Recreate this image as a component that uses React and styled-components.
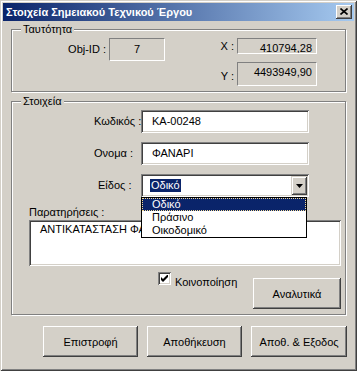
import React from 'react';
import styled, { createGlobalStyle } from 'styled-components';

const FONT = `"Liberation Sans", "DejaVu Sans", Arial, sans-serif`;

const GlobalStyle = createGlobalStyle`
  html, body { margin: 0; padding: 0; background: #D4D0C8; }
  body { font-family: ${FONT}; font-size: 11px; }
`;

const Window = styled.div`
  width: 357px;
  height: 371px;
  box-sizing: border-box;
  padding: 3px;
  background: #D4D0C8;
  box-shadow: inset 1px 1px #D4D0C8, inset -1px -1px #404040, inset 2px 2px #fff, inset -2px -2px #808080;
  display: flex;
  flex-direction: column;
  font-family: ${FONT};
  font-size: 11px;
  color: #000;
`;

const TitleBar = styled.div`
  height: 18px;
  flex: none;
  display: flex;
  align-items: center;
  justify-content: space-between;
  padding: 0 2px 0 3px;
  background: linear-gradient(to right, #0A246A, #A6CAF0);
`;

const Title = styled.span`
  color: #fff;
  font-weight: bold;
  font-size: 11px;
  line-height: 13px;
  white-space: nowrap;
`;

const CloseButton = styled.div`
  width: 16px;
  height: 14px;
  box-sizing: border-box;
  background: #D4D0C8;
  box-shadow: inset -1px -1px #404040, inset 1px 1px #fff, inset -2px -2px #808080;
  display: flex;
  align-items: center;
  justify-content: center;
  padding-bottom: 1px;
`;

const Body = styled.div`
  padding: 8px 7px 0 8px;
  display: flex;
  flex-direction: column;
`;

const GroupBox = styled.div`
  width: 335px;
  box-sizing: border-box;
  margin-top: ${p => p.$mt || 0}px;
  padding-bottom: ${p => p.$pb}px;
  border: 1px solid #808080;
  box-shadow: inset 1px 1px #fff, 1px 1px #fff;
  display: flex;
  flex-direction: column;
`;

const Caption = styled.div`
  align-self: flex-start;
  margin: -7px 0 0 9px;
  padding: 0 2px;
  height: 13px;
  line-height: 13px;
  background: #D4D0C8;
`;

const IdGrid = styled.div`
  display: grid;
  grid-template-columns: 97px 56px 72px 80px;
  grid-template-rows: 16px 24px;
  row-gap: 8px;
  margin-top: 2px;
`;

const IdLabel = styled.div`
  grid-column: ${p => p.$col};
  grid-row: ${p => p.$row};
  align-self: start;
  text-align: right;
  padding-right: 3px;
  line-height: ${p => p.$h}px;
  padding-top: ${p => p.$pt || 0}px;
  white-space: nowrap;
`;

const StaticField = styled.div`
  grid-column: ${p => p.$col};
  grid-row: ${p => p.$row};
  align-self: start;
  box-sizing: border-box;
  height: ${p => p.$h}px;
  border: 1px solid;
  border-color: #808080 #fff #fff #808080;
  padding: ${p => p.$pt}px 4px 0 4px;
  line-height: 13px;
  text-align: ${p => p.$align};
  overflow: hidden;
  white-space: nowrap;
`;

const FormGrid = styled.div`
  display: grid;
  grid-template-columns: 47px 168px;
  grid-auto-rows: 23px;
  row-gap: 9px;
  margin: 2px 0 0 82px;
`;

const FormLabel = styled.div`
  padding-left: ${p => p.$indent || 0}px;
  line-height: 23px;
  white-space: nowrap;
`;

const sunken = `
  box-shadow: inset 1px 1px #808080, inset -1px -1px #fff, inset 2px 2px #404040, inset -2px -2px #D4D0C8;
`;

const TextBox = styled.div`
  box-sizing: border-box;
  height: 23px;
  background: #fff;
  ${sunken}
  padding-left: 11px;
  line-height: 23px;
  white-space: nowrap;
`;

const Combo = styled.div`
  position: relative;
  box-sizing: border-box;
  height: 23px;
  background: #fff;
  ${sunken}
  display: flex;
  align-items: center;
  padding: 2px 2px 2px 11px;
`;

const Selected = styled.span`
  background: #0A246A;
  color: #fff;
  line-height: 13px;
  padding: 0 1px;
  margin-left: -2px;
`;

const DropButton = styled.div`
  margin-left: auto;
  width: 16px;
  height: 19px;
  box-sizing: border-box;
  background: #D4D0C8;
  box-shadow: inset 1px 1px #D4D0C8, inset -1px -1px #404040, inset 2px 2px #fff, inset -2px -2px #808080;
  display: flex;
  align-items: center;
  justify-content: center;
`;

const DropList = styled.ul`
  position: absolute;
  top: 100%;
  left: 0;
  width: 166px;
  box-sizing: border-box;
  margin: 0;
  padding: 0;
  list-style: none;
  background: #fff;
  border: 1px solid #000;
  z-index: 2;
`;

const DropItem = styled.li`
  height: 13px;
  line-height: 13px;
  padding-left: 10px;
  background: ${p => (p.$active ? '#0A246A' : 'transparent')};
  color: ${p => (p.$active ? '#fff' : '#000')};
  outline: ${p => (p.$active ? '1px dotted #F5DB95' : 'none')};
  outline-offset: -1px;
`;

const NotesLabel = styled.div`
  margin: 9px 0 0 17px;
  line-height: 13px;
`;

const NotesBox = styled.div`
  margin: 1px 0 0 17px;
  width: 312px;
  height: 46px;
  box-sizing: border-box;
  background: #fff;
  ${sunken}
  padding: 3px 0 0 11px;
  line-height: 13px;
  white-space: nowrap;
  overflow: hidden;
`;

const BottomRow = styled.div`
  display: flex;
  align-items: flex-start;
  width: 312px;
  margin: 6px 0 0 17px;
`;

const CheckWrap = styled.label`
  display: flex;
  align-items: flex-start;
  margin-left: 129px;
  gap: 4px;
`;

const CheckBox = styled.span`
  width: 13px;
  height: 13px;
  box-sizing: border-box;
  background: #fff;
  ${sunken}
  display: flex;
  align-items: center;
  justify-content: center;
`;

const CheckText = styled.span`
  line-height: 13px;
  margin-top: 4px;
`;

const Button = styled.button`
  width: ${p => p.$w}px;
  height: 31px;
  margin-top: ${p => p.$mt || 0}px;
  margin-left: ${p => (p.$push ? 'auto' : '0')};
  box-sizing: border-box;
  border: none;
  padding: 0;
  background: #D4D0C8;
  box-shadow: inset -1px -1px #404040, inset 1px 1px #fff, inset -2px -2px #808080, inset 2px 2px #D4D0C8;
  font-family: ${FONT};
  font-size: 11px;
  color: #000;
  white-space: nowrap;
`;

const ButtonRow = styled.div`
  display: flex;
  justify-content: flex-end;
  gap: 9px;
  margin-top: 11px;
`;

export default function App() {
  return (
    <>
      <GlobalStyle />
      <Window>
        <TitleBar>
          <Title>Στοιχεία Σημειακού Τεχνικού Έργου</Title>
          <CloseButton>
            <svg width="8" height="7" viewBox="0 0 8 7">
              <path d="M0.5 0.5 L7.5 6.5 M7.5 0.5 L0.5 6.5" stroke="#000" strokeWidth="1.6" />
            </svg>
          </CloseButton>
        </TitleBar>
        <Body>
          <GroupBox $pb={5}>
            <Caption>Ταυτότητα</Caption>
            <IdGrid>
              <IdLabel $col="1" $row="1 / span 2" $h={23}>Obj-ID :</IdLabel>
              <StaticField $col="2" $row="1 / span 2" $h={23} $pt={4} $align="center">7</StaticField>
              <IdLabel $col="3" $row="1" $h={16}>X :</IdLabel>
              <StaticField $col="4" $row="1" $h={16} $pt={3} $align="right">410794,28</StaticField>
              <IdLabel $col="3" $row="2" $h={24} $pt={2}>Y :</IdLabel>
              <StaticField $col="4" $row="2" $h={24} $pt={3} $align="right">4493949,90</StaticField>
            </IdGrid>
          </GroupBox>

          <GroupBox $mt={9} $pb={5}>
            <Caption>Στοιχεία</Caption>
            <FormGrid>
              <FormLabel>Κωδικός :</FormLabel>
              <TextBox>KA-00248</TextBox>
              <FormLabel>Ονομα :</FormLabel>
              <TextBox>ΦΑΝΑΡΙ</TextBox>
              <FormLabel $indent={4}>Είδος :</FormLabel>
              <Combo>
                <Selected>Οδικό</Selected>
                <DropButton>
                  <svg width="7" height="4" viewBox="0 0 7 4">
                    <path d="M0 0 H7 L3.5 4 Z" fill="#000" />
                  </svg>
                </DropButton>
                <DropList>
                  <DropItem $active>Οδικό</DropItem>
                  <DropItem>Πράσινο</DropItem>
                  <DropItem>Οικοδομικό</DropItem>
                </DropList>
              </Combo>
            </FormGrid>
            <NotesLabel>Παρατηρήσεις :</NotesLabel>
            <NotesBox>ΑΝΤΙΚΑΤΑΣΤΑΣΗ ΦΑ</NotesBox>
            <BottomRow>
              <CheckWrap>
                <CheckBox>
                  <svg width="7" height="7" viewBox="0 0 7 7">
                    <path d="M0 2 L2 4 L7 -1 L7 2 L2 7 L0 5 Z" fill="#000" />
                  </svg>
                </CheckBox>
                <CheckText>Κοινοποίηση</CheckText>
              </CheckWrap>
              <Button $w={88} $mt={6} $push>Αναλυτικά</Button>
            </BottomRow>
          </GroupBox>

          <ButtonRow>
            <Button $w={95}>Επιστροφή</Button>
            <Button $w={95}>Αποθήκευση</Button>
            <Button $w={96}>Αποθ. &amp; Εξοδος</Button>
          </ButtonRow>
        </Body>
      </Window>
    </>
  );
}
